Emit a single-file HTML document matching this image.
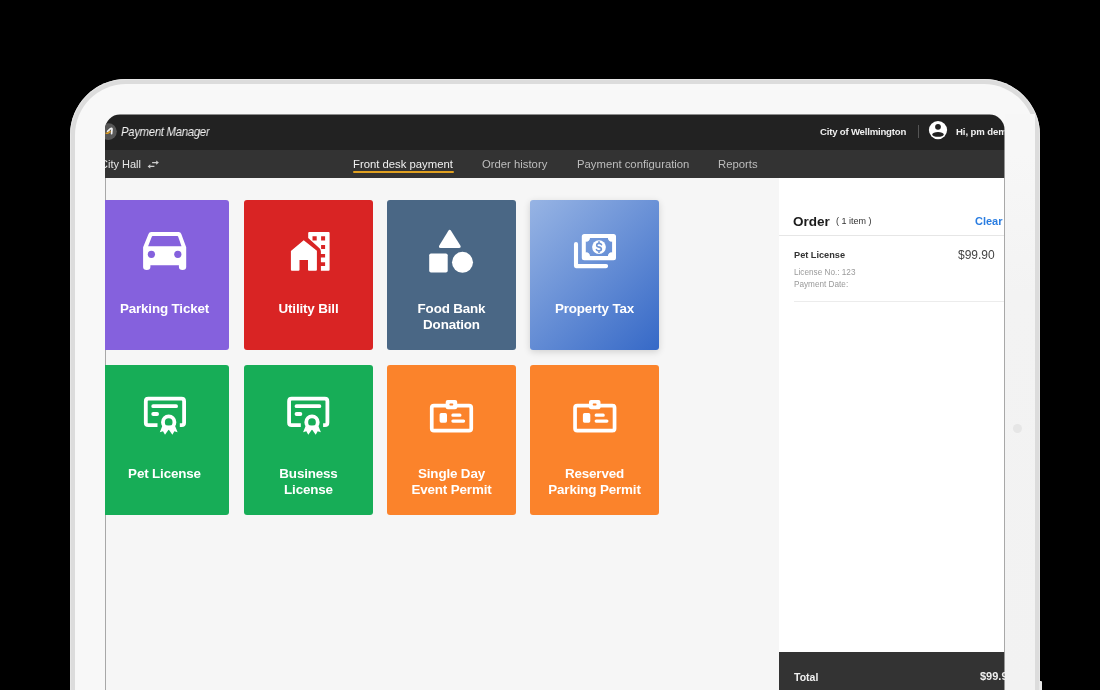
<!DOCTYPE html>
<html><head><meta charset="utf-8">
<style>
*{box-sizing:border-box;margin:0;padding:0}
html,body{width:1100px;height:690px;overflow:hidden;background:#000;font-family:"Liberation Sans",sans-serif}
#frame{position:absolute;left:70px;top:79px;width:970px;height:700px;border-radius:56px;background:#dcdcdc;box-shadow:inset 0 0 0 1px #e6e6e6}
#frame-in{position:absolute;left:75px;top:84px;width:960px;height:700px;border-radius:51px;background:#f8f8f8}
#btn{position:absolute;left:1039px;top:681px;width:3px;height:12px;background:#e8e8e8;border-radius:1px 1px 0 0}
#cam{position:absolute;left:1013px;top:424px;width:9px;height:9px;border-radius:50%;background:#e6e6e6}
#screen{position:absolute;left:0;top:0;width:1100px;height:690px;clip-path:inset(114.5px 95.5px 0px 105px round 15px 15px 0 0)}
.b{position:absolute}
.tile{position:absolute;width:129px;height:150px;border-radius:3px;color:#fff;font-weight:bold;font-size:13.4px;letter-spacing:-0.15px;text-align:center;line-height:16.3px}
.tile .lbl{position:absolute;left:0;width:129px;top:100.6px;will-change:transform}
.txt{position:absolute;white-space:nowrap;line-height:1;will-change:transform}
svg{position:absolute;left:0;top:0}
</style></head><body>
<div id="frame"></div><div id="frame-in"></div><div class="b" style="left:1005px;top:114px;width:30px;height:580px;background:linear-gradient(180deg,#f7f7f7 0,#f7f7f7 40px,#f3f3f3 180px,#f2f2f2 100%)"></div><div id="btn"></div><div id="cam"></div>
<div id="screen">
<div class="b" style="left:105px;top:114px;width:900px;height:600px;background:#f6f6f6"></div>
<div class="b" style="left:105px;top:114px;width:900px;height:35.5px;background:#222"></div>
<div class="b" style="left:105px;top:149.5px;width:900px;height:28.5px;background:#333"></div>
<div class="b" style="left:779px;top:178px;width:226px;height:520px;background:#fff"></div>
<div class="b" style="left:779px;top:652px;width:226px;height:50px;background:#333"></div>
<div class="b" style="left:105px;top:178px;width:1px;height:520px;background:#a8a8a8"></div>
<div class="tile" style="left:100.3px;top:200px;background:#8561dd;"><div class="lbl">Parking Ticket</div></div>
<div class="tile" style="left:243.6px;top:200px;background:#d92424;"><div class="lbl">Utility Bill</div></div>
<div class="tile" style="left:387px;top:200px;background:#4a6785;"><div class="lbl">Food Bank<br>Donation</div></div>
<div class="tile" style="left:530.3px;top:200px;background:linear-gradient(135deg,#97b4e4,#3669c7);box-shadow:0 2px 7px rgba(0,0,0,0.15);"><div class="lbl">Property Tax</div></div>
<div class="tile" style="left:100.3px;top:365px;background:#17ad57;"><div class="lbl">Pet License</div></div>
<div class="tile" style="left:243.6px;top:365px;background:#17ad57;"><div class="lbl">Business<br>License</div></div>
<div class="tile" style="left:387px;top:365px;background:#fb832b;"><div class="lbl">Single Day<br>Event Permit</div></div>
<div class="tile" style="left:530.3px;top:365px;background:#fb832b;"><div class="lbl">Reserved<br>Parking Permit</div></div>
<div class="txt" style="left:121.40px;top:125.10px;font-size:13px;color:#f2f2f2;font-weight:normal;font-style:italic;letter-spacing:-0.35px;transform:scaleX(0.875);transform-origin:0 0;">Payment Manager</div>
<div class="txt" style="left:100.30px;top:158.89px;font-size:11px;color:#e6e6e6;font-weight:normal;font-style:normal;letter-spacing:0px;">City Hall</div>
<div class="txt" style="left:352.80px;top:158.63px;font-size:11.3px;color:#f0f0f0;font-weight:normal;font-style:normal;letter-spacing:0px;">Front desk payment</div>
<div class="txt" style="left:482.40px;top:158.63px;font-size:11.3px;color:#bdbdbd;font-weight:normal;font-style:normal;letter-spacing:0px;">Order history</div>
<div class="txt" style="left:577.00px;top:158.63px;font-size:11.3px;color:#bdbdbd;font-weight:normal;font-style:normal;letter-spacing:0px;">Payment configuration</div>
<div class="txt" style="left:718.00px;top:158.63px;font-size:11.3px;color:#bdbdbd;font-weight:normal;font-style:normal;letter-spacing:0px;">Reports</div>
<div class="b" style="left:353px;top:170.8px;width:101px;height:2px;background:#e0a020;border-radius:1px"></div>
<div class="txt" style="left:819.70px;top:127.17px;font-size:9.6px;color:#f0f0f0;font-weight:bold;font-style:normal;letter-spacing:-0.2px;">City of Wellmington</div>
<div class="b" style="left:918.3px;top:125px;width:1px;height:12.7px;background:#555"></div>
<div class="txt" style="left:955.60px;top:127.17px;font-size:9.6px;color:#f0f0f0;font-weight:bold;font-style:normal;letter-spacing:-0.1px;">Hi, pm demo</div>
<div class="txt" style="left:792.90px;top:214.97px;font-size:13.5px;color:#1b1b1b;font-weight:bold;font-style:normal;letter-spacing:0px;">Order</div>
<div class="txt" style="left:835.50px;top:216.68px;font-size:9px;color:#333;font-weight:normal;font-style:normal;letter-spacing:0px;">( 1 item )</div>
<div class="txt" style="left:975.00px;top:216.19px;font-size:11px;color:#2a7de1;font-weight:bold;font-style:normal;letter-spacing:0px;">Clear</div>
<div class="b" style="left:779px;top:235px;width:226px;height:1.2px;background:#e6e6e6"></div>
<div class="txt" style="left:793.60px;top:250.91px;font-size:9.2px;color:#333;font-weight:bold;font-style:normal;letter-spacing:0px;">Pet License</div>
<div class="txt" style="left:957.60px;top:248.74px;font-size:12px;color:#444;font-weight:normal;font-style:normal;letter-spacing:0px;">$99.90</div>
<div class="txt" style="left:793.60px;top:268.56px;font-size:8.2px;color:#9a9a9a;font-weight:normal;font-style:normal;letter-spacing:0px;">License No.: 123</div>
<div class="txt" style="left:793.60px;top:281.26px;font-size:8.2px;color:#9a9a9a;font-weight:normal;font-style:normal;letter-spacing:0px;">Payment Date:</div>
<div class="b" style="left:793.6px;top:301.3px;width:211px;height:1px;background:#ececec"></div>
<div class="txt" style="left:793.70px;top:671.91px;font-size:10.5px;color:#f0f0f0;font-weight:bold;font-style:normal;letter-spacing:0px;">Total</div>
<div class="txt" style="left:980.00px;top:671.49px;font-size:11px;color:#f0f0f0;font-weight:bold;font-style:normal;letter-spacing:0px;">$99.90</div>
<svg width="1100" height="690" viewBox="0 0 1100 690"><path fill-rule="evenodd" fill="#fff" d="M151.2,232 H178.6 Q180.6,232 181.3,234 L186.2,247.2 V267 Q186.2,270 182.55,270 Q178.9,270 178.9,267 V265.2 H150.4 V267 Q150.4,270 146.75,270 Q143.1,270 143.1,267 V247.2 L148.5,234 Q149.2,232 151.2,232 Z M152.6,236 H177.4 Q177.9,236 178.1,236.6 L181.5,246.2 H148.1 L151.9,236.6 Q152.1,236 152.6,236 Z"/>
<circle cx="151.4" cy="254.3" r="3.6" fill="#8561dd"/><circle cx="177.8" cy="254.3" r="3.6" fill="#8561dd"/>
<path fill="#fff" d="M303.7,240.2 L290.9,251.1 V269.7 Q290.9,270.7 291.9,270.7 H298.5 Q299.5,270.7 299.5,269.7 V260.1 H308 V269.7 Q308,270.7 309,270.7 H315.9 Q316.9,270.7 316.9,269.7 V250.7 Z"/>
<path fill="#fff" fill-rule="evenodd" d="M309.2,232 H328.6 Q329.6,232 329.6,233 V269.7 Q329.6,270.7 328.6,270.7 H320.9 V251.5 Q320.9,249.6 319.5,248.3 L308.2,238 V233 Q308.2,232 309.2,232 Z M312.5,236.2 H316.7 V240.6 H312.5 Z M321.1,236.2 H325.1 V240.6 H321.1 Z M321.1,245.1 H325.1 V248.9 H321.1 Z M320.9,254 H325.1 V257.6 H320.9 Z M320.9,262.3 H325.1 V265.9 H320.9 Z"/>
<path fill="#fff" d="M448.2,231 Q449.7,228.6 451.2,231 L460.3,245.6 Q461.5,247.9 459,247.9 H440.6 Q438.1,247.9 439.3,245.6 Z"/>
<rect x="429.2" y="253.5" width="18.5" height="19" rx="1.8" fill="#fff"/>
<circle cx="462.5" cy="262.3" r="10.5" fill="#fff"/>
<path fill="#fff" fill-rule="evenodd" d="M584.3,233.9 H613.5 Q616,233.9 616,236.4 V257.7 Q616,260.2 613.5,260.2 H584.3 Q581.8,260.2 581.8,257.7 V236.4 Q581.8,233.9 584.3,233.9 Z M590,237.9 H607.9 A3.6,3.6 0 0 0 612.1,241.6 V252.4 A3.6,3.6 0 0 0 607.9,256.1 H590 A3.6,3.6 0 0 0 585.8,252.4 V241.6 A3.6,3.6 0 0 0 590,237.9 Z"/>
<circle cx="599" cy="247.1" r="6.9" fill="#fff"/>
<path fill="none" stroke="#fff" stroke-width="4.1" stroke-linecap="round" stroke-linejoin="round" d="M576,244 V266.1 H606.1"/>
<path fill="none" stroke="#6e93d4" stroke-width="1.6" stroke-linecap="round" d="M601.5,244.7 Q600.9,243.4 599,243.4 Q596.7,243.4 596.7,245.3 Q596.7,246.8 599,247.1 Q601.4,247.4 601.4,249.1 Q601.4,250.9 599,250.9 Q597.1,250.9 596.4,249.6 M599,241.9 V243.3 M599,251 V252.4"/>
<g transform="translate(0,0)"><path fill="none" stroke="#fff" stroke-width="3.8" d="M157.5,425.2 H148.3 Q145.8,425.2 145.8,422.7 V401.2 Q145.8,398.7 148.3,398.7 H181.6 Q184.1,398.7 184.1,401.2 V422.7 Q184.1,425.2 181.6,425.2 H179.8"/><path fill="none" stroke="#fff" stroke-width="3.8" stroke-linecap="round" d="M153.2,406.2 H176.1 M153.2,414 H157.1"/><path fill="#fff" d="M162.5,425.5 L159.8,432.2 L163,431.2 L165,434.8 L168.7,429.6 L172.4,434.8 L174.4,431.2 L177.6,432.2 L174.9,425.5 Z"/><circle cx="168.7" cy="422.2" r="5.75" fill="none" stroke="#fff" stroke-width="3.8"/></g>
<g transform="translate(143.3,0)"><path fill="none" stroke="#fff" stroke-width="3.8" d="M157.5,425.2 H148.3 Q145.8,425.2 145.8,422.7 V401.2 Q145.8,398.7 148.3,398.7 H181.6 Q184.1,398.7 184.1,401.2 V422.7 Q184.1,425.2 181.6,425.2 H179.8"/><path fill="none" stroke="#fff" stroke-width="3.8" stroke-linecap="round" d="M153.2,406.2 H176.1 M153.2,414 H157.1"/><path fill="#fff" d="M162.5,425.5 L159.8,432.2 L163,431.2 L165,434.8 L168.7,429.6 L172.4,434.8 L174.4,431.2 L177.6,432.2 L174.9,425.5 Z"/><circle cx="168.7" cy="422.2" r="5.75" fill="none" stroke="#fff" stroke-width="3.8"/></g>
<g transform="translate(0,0)"><rect x="431.75" y="405.65" width="39.5" height="25" rx="2.2" fill="none" stroke="#fff" stroke-width="3.7"/><rect x="445.7" y="399.9" width="11.5" height="9.4" rx="2" fill="#fff"/><rect x="449.4" y="403.6" width="3.9" height="1.9" rx="0.9" fill="#fb832b"/><rect x="439.6" y="413.1" width="7.4" height="9.6" rx="1.6" fill="#fff"/><path fill="none" stroke="#fff" stroke-width="3.2" stroke-linecap="round" d="M452.9,415.2 H459.9 M452.9,421.05 H463.6"/></g>
<g transform="translate(143.3,0)"><rect x="431.75" y="405.65" width="39.5" height="25" rx="2.2" fill="none" stroke="#fff" stroke-width="3.7"/><rect x="445.7" y="399.9" width="11.5" height="9.4" rx="2" fill="#fff"/><rect x="449.4" y="403.6" width="3.9" height="1.9" rx="0.9" fill="#fb832b"/><rect x="439.6" y="413.1" width="7.4" height="9.6" rx="1.6" fill="#fff"/><path fill="none" stroke="#fff" stroke-width="3.2" stroke-linecap="round" d="M452.9,415.2 H459.9 M452.9,421.05 H463.6"/></g>
<circle cx="108.5" cy="131.6" r="8.3" fill="#575757"/>
<path fill="none" stroke="#f4f4f4" stroke-width="1.7" stroke-linecap="round" stroke-linejoin="round" d="M107.6,131.4 L110.5,128.7 Q111.9,127.6 112,129.2 L111.6,133.6"/>
<path fill="none" stroke="#d99a22" stroke-width="1.6" stroke-linejoin="round" d="M105.6,133.3 H107.6 L110.6,131.4"/>
<path fill="none" stroke="#cdcdcd" stroke-width="1.4" d="M152.1,162.6 H157 M149.4,166.4 H154.4"/>
<path fill="#cdcdcd" d="M156.2,160.4 L158.9,162.6 L156.2,164.8 Z M150.3,164.2 L147.6,166.4 L150.3,168.6 Z"/>
<circle cx="938" cy="130.1" r="9.1" fill="#fff"/>
<circle cx="938" cy="126.8" r="2.9" fill="#222"/>
<ellipse cx="938" cy="134.4" rx="5.7" ry="2.45" fill="#222"/></svg>
</div>
<div class="b" style="left:1004px;top:178px;width:1px;height:474px;background:#a8a8a8"></div>
</body></html>
